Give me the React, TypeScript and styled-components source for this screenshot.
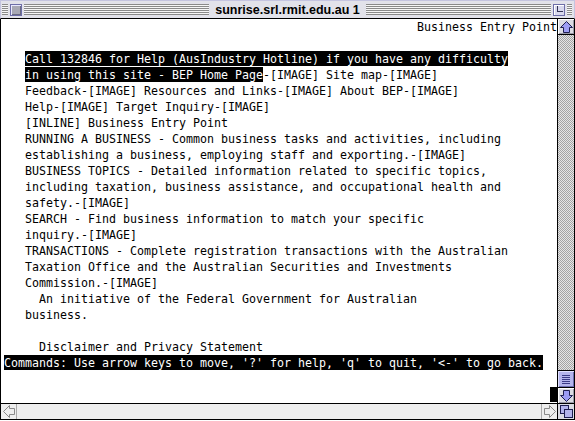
import React from "react";
import styled, { createGlobalStyle } from "styled-components";

const GlobalStyle = createGlobalStyle`
  html, body {
    margin: 0;
    padding: 0;
    background: #fff;
  }
`;

const COLS = 79;

type Seg = { text: string; hi?: boolean };
type Line = Seg[];

const lines: Line[] = [
  [{ text: " ".repeat(COLS - 20) + "Business Entry Point" }],
  [],
  [{ text: "   " }, { text: "Call 132846 for Help (AusIndustry Hotline) if you have any difficulty", hi: true }],
  [
    { text: "   " },
    { text: "in using this site - BEP Home Page", hi: true },
    { text: "-[IMAGE] Site map-[IMAGE]" },
  ],
  [{ text: "   Feedback-[IMAGE] Resources and Links-[IMAGE] About BEP-[IMAGE]" }],
  [{ text: "   Help-[IMAGE] Target Inquiry-[IMAGE]" }],
  [{ text: "   [INLINE] Business Entry Point" }],
  [{ text: "   RUNNING A BUSINESS - Common business tasks and activities, including" }],
  [{ text: "   establishing a business, employing staff and exporting.-[IMAGE]" }],
  [{ text: "   BUSINESS TOPICS - Detailed information related to specific topics," }],
  [{ text: "   including taxation, business assistance, and occupational health and" }],
  [{ text: "   safety.-[IMAGE]" }],
  [{ text: "   SEARCH - Find business information to match your specific" }],
  [{ text: "   inquiry.-[IMAGE]" }],
  [{ text: "   TRANSACTIONS - Complete registration transactions with the Australian" }],
  [{ text: "   Taxation Office and the Australian Securities and Investments" }],
  [{ text: "   Commission.-[IMAGE]" }],
  [{ text: "     An initiative of the Federal Government for Australian" }],
  [{ text: "   business." }],
  [],
  [{ text: "     Disclaimer and Privacy Statement" }],
  [{ text: "Commands: Use arrow keys to move, '?' for help, 'q' to quit, '<-' to go back.", hi: true }],
  [],
];

const Window = styled.div`
  width: 575px;
  height: 420px;
  box-sizing: border-box;
  display: flex;
  flex-direction: column;
  border-bottom: 1px solid #000;
  background: #fff;
`;

const TitleBar = styled.div`
  height: 19px;
  box-sizing: border-box;
  display: flex;
  align-items: center;
  padding: 0 2px 0 1px;
  background: #e2e2ea;
  border: 1px solid #c4c4e0;
  border-bottom: 1px solid #000;
`;

const Stripes = styled.div<{ $grow?: boolean; $w?: number }>`
  flex: ${(p) => (p.$grow ? "1" : "none")};
  width: ${(p) => (p.$w ? `${p.$w}px` : "auto")};
  height: 11px;
  background: repeating-linear-gradient(to bottom, #8a8a8a 0 1px, #f6f6f6 1px 2px);
`;

const Title = styled.div`
  padding: 0 6px;
  font-family: "Liberation Sans", Arial, sans-serif;
  font-weight: bold;
  font-size: 12.5px;
  line-height: 16px;
  color: #000;
  white-space: nowrap;
`;

const BoxButton = styled.div`
  width: 12px;
  height: 12px;
  box-sizing: border-box;
  margin: 0 2px;
  border: 1px solid #6e6ea8;
  background: #a8a8b4;
  box-shadow: inset 1px 1px 0 #e8e8ff, inset -1px -1px 0 #6a6a80;
  display: flex;
  align-items: flex-start;
  justify-content: flex-end;
`;

const ZoomButton = styled(BoxButton)`
  background: #d8d8ec;
  box-shadow: inset 1px 1px 0 #fff;
`;

const ZoomInner = styled.div`
  width: 5px;
  height: 5px;
  margin: 1px 1px 0 0;
  border-left: 1px solid #333355;
  border-bottom: 1px solid #333355;
`;

const Body = styled.div`
  display: flex;
  height: 384px;
`;

const TextPane = styled.div`
  width: 557px;
  box-sizing: border-box;
  border-left: 1px solid #000;
  padding-left: 3px;
  font-family: "DejaVu Sans Mono", "Liberation Mono", monospace;
  font-size: 11.63px;
  line-height: 16px;
  color: #000;
  white-space: pre;
  overflow: hidden;
`;

const Row = styled.div`
  height: 16px;
`;

const Hi = styled.span`
  display: inline-block;
  height: 15px;
  vertical-align: top;
  background: #000;
  color: #fff;
`;

const Cursor = styled.span`
  display: inline-block;
  width: 7px;
  height: 15px;
  vertical-align: top;
  background: #000;
`;

const VScroll = styled.div`
  width: 18px;
  box-sizing: border-box;
  border-left: 1px solid #000;
  border-right: 1px solid #000;
  display: flex;
  flex-direction: column;
`;

const ArrowBox = styled.div<{ $edge: "top" | "bottom" }>`
  height: 16px;
  box-sizing: border-box;
  display: flex;
  align-items: center;
  justify-content: center;
  background: #dcdce4;
  box-shadow: inset 1px 1px 0 #fff, inset -1px -1px 0 #9a9aa8;
  ${(p) => (p.$edge === "top" ? "border-bottom: 1px solid #000;" : "border-top: 1px solid #000;")}
`;

const Track = styled.div`
  flex: 1;
  background: repeating-conic-gradient(#a4a4a4 0 25%, #e6e6e6 0 50%) 0 0 / 2px 2px;
`;

const Thumb = styled.div`
  height: 17px;
  box-sizing: border-box;
  border-top: 1px solid #000;
  background: #b4b4ec;
  box-shadow: inset 1px 1px 0 #e0e0ff, inset -1px -1px 0 #6c6cb0;
  display: flex;
  flex-direction: column;
  align-items: center;
  justify-content: center;
  gap: 1px;
`;

const Grip = styled.div`
  width: 8px;
  height: 1px;
  background: #3a3a88;
`;

const HScroll = styled.div`
  height: 16px;
  box-sizing: border-box;
  display: flex;
  border-top: 1px solid #000;
  border-left: 1px solid #000;
  border-right: 1px solid #000;
`;

const HArrow = styled.div<{ $side: "left" | "right" }>`
  width: 16px;
  box-sizing: border-box;
  display: flex;
  align-items: center;
  justify-content: center;
  background: #eeeeee;
  ${(p) => (p.$side === "left" ? "border-right: 1px solid #aaa;" : "border-left: 1px solid #aaa;")}
`;

const HTrack = styled.div`
  flex: 1;
  background: #eeeeee;
`;

const GrowBox = styled.div`
  width: 17px;
  box-sizing: border-box;
  border-left: 1px solid #000;
  display: flex;
  align-items: center;
  justify-content: center;
  background: #dcdce4;
`;

const UpIcon = ({ down }: { down?: boolean }) => (
  <svg width="13" height="12" viewBox="0 0 13 12" style={down ? { transform: "rotate(180deg)" } : undefined}>
    <path d="M6.5 0.5 L12.5 6.5 H9.5 V11.5 H3.5 V6.5 H0.5 Z" fill="#9c9cf4" stroke="#1e1e50" />
  </svg>
);

const SideIcon = ({ right }: { right?: boolean }) => (
  <svg width="12" height="13" viewBox="0 0 12 13" style={right ? { transform: "rotate(180deg)" } : undefined}>
    <path d="M0.5 6.5 L6.5 0.5 V3.5 H11.5 V9.5 H6.5 V12.5 Z" fill="none" stroke="#8a8a8a" />
  </svg>
);

const GrowIcon = () => (
  <svg width="13" height="13" viewBox="0 0 13 13">
    <rect x="0.5" y="0.5" width="8" height="8" fill="#b4b4ec" stroke="#1e1e50" />
    <rect x="4.5" y="4.5" width="8" height="8" fill="#b4b4ec" stroke="#1e1e50" />
  </svg>
);

const App: React.FC = () => {
  return (
    <>
      <GlobalStyle />
      <Window>
        <TitleBar>
          <Stripes $w={6} />
          <BoxButton />
          <Stripes $grow />
          <Title>sunrise.srl.rmit.edu.au 1</Title>
          <Stripes $grow />
          <ZoomButton>
            <ZoomInner />
          </ZoomButton>
          <Stripes $w={5} />
        </TitleBar>

        <Body>
          <TextPane>
            {lines.map((line, i) => (
              <Row key={i}>
                {line.map((seg, j) => (seg.hi ? <Hi key={j}>{seg.text}</Hi> : <span key={j}>{seg.text}</span>))}
              </Row>
            ))}
            <Row>
              {" ".repeat(COLS - 1)}
              <Cursor />
            </Row>
          </TextPane>

          <VScroll>
            <ArrowBox $edge="top">
              <UpIcon />
            </ArrowBox>
            <Track />
            <Thumb>
              <Grip />
              <Grip />
              <Grip />
              <Grip />
              <Grip />
            </Thumb>
            <ArrowBox $edge="bottom">
              <UpIcon down />
            </ArrowBox>
          </VScroll>
        </Body>

        <HScroll>
          <HArrow $side="left">
            <SideIcon />
          </HArrow>
          <HTrack />
          <HArrow $side="right">
            <SideIcon right />
          </HArrow>
          <GrowBox>
            <GrowIcon />
          </GrowBox>
        </HScroll>
      </Window>
    </>
  );
};

export default App;
